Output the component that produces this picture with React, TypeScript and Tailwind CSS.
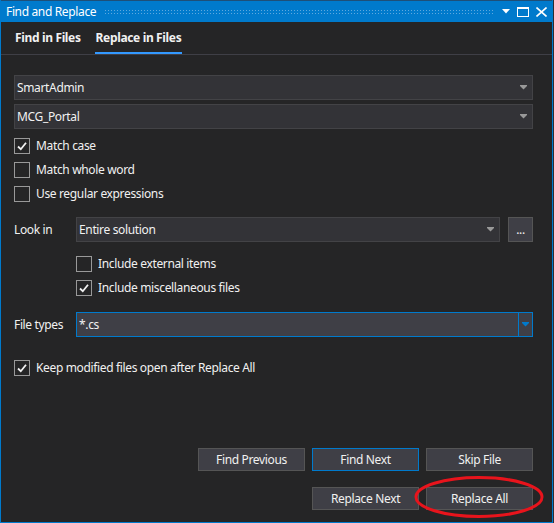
import React from "react";

const Arrow = ({ color = "#999999" }: { color?: string }) => (
  <svg width="7" height="5" viewBox="0 0 7 5" className="shrink-0">
    <rect x="0" y="0" width="7" height="1" fill={color} />
    <path d="M0 1 L7 1 L3.5 4.5 Z" fill={color} />
  </svg>
);

const Check = () => (
  <svg width="12" height="12" viewBox="0 0 12 12">
    <path d="M2 6.5 L4.8 9.2 L10 2.8" stroke="#f1f1f1" strokeWidth="1.8" fill="none" />
  </svg>
);

const CheckRow = ({ label, checked }: { label: string; checked?: boolean }) => (
  <div className="h-[24px] flex items-center">
    <div className="w-[16px] h-[16px] border border-[#999999] bg-[#252526] flex items-center justify-center shrink-0">
      {checked && <Check />}
    </div>
    <span className="ml-[6px] text-[#f1f1f1]">{label}</span>
  </div>
);

const Combo = ({ text }: { text: string }) => (
  <div className="h-[25px] flex items-center bg-[#333337] border border-[#434346] pl-[2px] pr-[5px]">
    <span className="flex-1 text-[#f1f1f1]">{text}</span>
    <Arrow />
  </div>
);

const Btn = ({ label, focused }: { label: string; focused?: boolean }) => (
  <div
    className={
      "w-[107px] h-[23px] flex items-center justify-center bg-[#3f3f46] text-[#f1f1f1] border " +
      (focused ? "border-[#007acc]" : "border-[#555555]")
    }
  >
    {label}
  </div>
);

export default function App() {
  return (
    <div
      className="w-[554px] h-[523px] bg-[#2d2d30] relative text-[12px] leading-none tracking-[-0.35px]"
      style={{ fontFamily: '"Noto Sans", "Open Sans", sans-serif' }}
    >
      <div className="w-[553px] h-[523px] flex flex-col bg-[#252526] border-x border-b border-[#007acc]">
        {/* Title bar */}
        <div className="h-[22px] bg-[#007acc] flex items-center shrink-0 border-t border-[#1e4f78]">
          <span className="pl-[5px] text-white">Find and Replace</span>
          <div className="flex-1 mx-[8px] h-[5px] bg-[radial-gradient(circle,#5ea9df_0.8px,transparent_1px)] bg-[length:3px_3px]" />
          <div className="flex items-center pr-[5px]">
            <svg width="8" height="5" viewBox="0 0 8 5" className="mr-[7px]">
              <path d="M0 0 L8 0 L4 4.5 Z" fill="#ffffff" />
            </svg>
            <svg width="12" height="10" viewBox="0 0 12 10" className="mr-[7px]">
              <rect x="0.5" y="0.5" width="11" height="9" fill="none" stroke="#ffffff" />
              <rect x="0" y="0" width="12" height="2" fill="#ffffff" />
            </svg>
            <svg width="11" height="10" viewBox="0 0 11 10">
              <path d="M0.5 0.5 L10.5 9.5 M10.5 0.5 L0.5 9.5" stroke="#ffffff" strokeWidth="1.6" />
            </svg>
          </div>
        </div>

        {/* Tabs */}
        <div className="h-[33px] flex items-stretch border-b border-[#3f3f46] shrink-0 pl-[14px] font-bold text-[#f1f1f1]">
          <div className="flex items-center pr-[14px]">Find in Files</div>
          <div className="flex items-center px-[1px] relative">
            Replace in Files
            <div className="absolute left-0 right-0 bottom-0 h-[2px] bg-[#3399ff]" />
          </div>
        </div>

        {/* Content */}
        <div className="flex-1 flex flex-col pl-[13px] pr-[19px]">
          <div className="mt-[20px] flex flex-col gap-[4px]">
            <Combo text="SmartAdmin" />
            <Combo text="MCG_Portal" />
          </div>
          <div className="mt-[5px] flex flex-col">
            <CheckRow label="Match case" checked />
            <CheckRow label="Match whole word" />
            <CheckRow label="Use regular expressions" />
          </div>

          <div className="mt-[11px] flex items-center h-[25px]">
            <span className="w-[62px] text-[#f1f1f1]">Look in</span>
            <div className="flex-1">
              <Combo text="Entire solution" />
            </div>
            <div className="ml-[8px] w-[25px] h-[25px] bg-[#3f3f46] border border-[#555555] text-[#f1f1f1] flex items-center justify-center">
              ...
            </div>
          </div>
          <div className="mt-[10px] pl-[62px] flex flex-col">
            <CheckRow label="Include external items" />
            <CheckRow label="Include miscellaneous files" checked />
          </div>

          <div className="mt-[12px] flex items-center h-[25px]">
            <span className="w-[62px] text-[#f1f1f1]">File types</span>
            <div className="flex-1 h-[25px] flex items-stretch bg-[#3f3f46] border border-[#007acc]">
              <span className="flex-1 flex items-center pl-[2px] text-[#f1f1f1]">*.cs</span>
              <div className="w-[14px] border-l border-[#007acc] flex items-center justify-center">
                <Arrow color="#007acc" />
              </div>
            </div>
          </div>

          <div className="mt-[19px] flex flex-col">
            <CheckRow label="Keep modified files open after Replace All" checked />
          </div>

          <div className="mt-auto pb-[12px] flex flex-col items-end gap-[16px]">
            <div className="flex gap-[7px]">
              <Btn label="Find Previous" />
              <Btn label="Find Next" focused />
              <Btn label="Skip File" />
            </div>
            <div className="flex gap-[7px]">
              <Btn label="Replace Next" />
              <Btn label="Replace All" />
            </div>
          </div>
        </div>
      </div>

      {/* Red annotation ellipse */}
      <svg className="absolute left-[413px] top-[475px] pointer-events-none" width="132" height="44" viewBox="0 0 132 44">
        <ellipse cx="66" cy="22" rx="63" ry="19.5" fill="none" stroke="#e8141c" strokeWidth="3" />
      </svg>
    </div>
  );
}
